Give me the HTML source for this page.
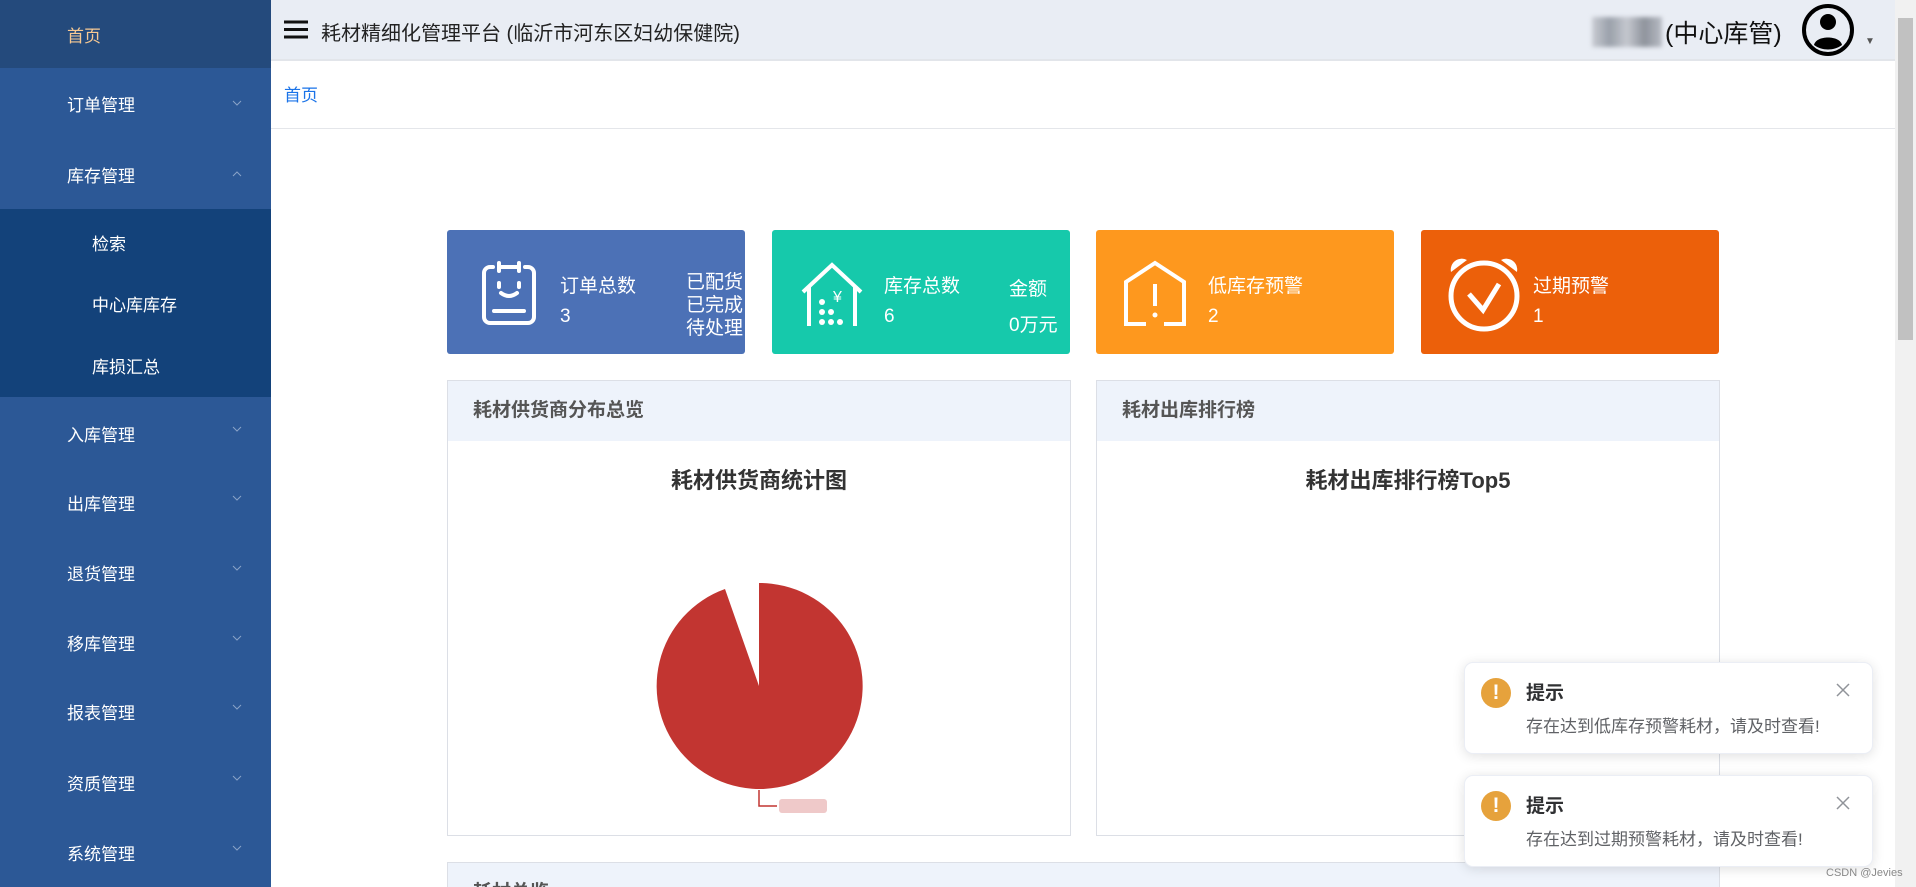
<!DOCTYPE html>
<html style="width:1916px;height:887px;overflow:hidden"><head><meta charset="utf-8"><style>
*{margin:0;padding:0;box-sizing:border-box}
body{width:1916px;height:887px;overflow:hidden;position:relative;background:#fff;font-family:"Liberation Sans","Noto Sans CJK SC",sans-serif}
.abs{position:absolute}
#side{left:0;top:0;width:271px;height:887px;background:#2c5896}
.mi{position:absolute;left:0;width:271px;color:#fff;font-size:17px;padding-left:67px;display:flex;align-items:center}
.arr{position:absolute;left:232px;width:10px;height:10px;}
#hdr{left:271px;top:0;width:1624px;height:61px;background:#e9edf4;border-bottom:2px solid #e2e5ea}
.card{position:absolute;top:230px;height:124px;border-radius:3px;color:#fff;font-size:19px}
.panel{position:absolute;border:1px solid #dcdfe6;background:#fff}
.ph{height:60px;background:#eef3fb;font-weight:bold;color:#555;font-size:19px;padding-left:25px;line-height:60px}
.nt{position:absolute;left:1464px;width:409px;height:92px;background:#fff;border-radius:9px;box-shadow:0 2px 12px rgba(0,0,0,.12);border:1px solid #ebeef5}
.nt .ic{position:absolute;left:16px;top:15px;width:30px;height:30px;border-radius:50%;background:#e6a23c;color:#fff;text-align:center;font-weight:bold;font-size:21px;line-height:30px}
.nt .t{position:absolute;left:61px;top:15px;font-weight:bold;font-size:19px;color:#303133}
.nt .m{position:absolute;left:61px;top:49px;font-size:17px;color:#606266}
.nt .x{position:absolute;right:22px;top:20px}
</style></head><body>
<div id="side" class="abs">
 <div class="mi" style="top:0;height:68px;background:#244a7c;color:#f7c993">首页</div>
 <div class="mi" style="top:68px;height:71px">订单管理<svg class="arr" style="top:30px" viewBox="0 0 10 10"><path d="M1 3l4 4 4-4" fill="none" stroke="#8aa3c8" stroke-width="1"/></svg></div>
 <div class="mi" style="top:139px;height:70px">库存管理<svg class="arr" style="top:30px" viewBox="0 0 10 10"><path d="M1 7l4-4 4 4" fill="none" stroke="#8aa3c8" stroke-width="1"/></svg></div>
 <div class="abs" style="top:209px;left:0;width:271px;height:188px;background:#13427a"></div>
 <div class="mi" style="top:209px;height:66px;padding-left:92px">检索</div>
 <div class="mi" style="top:272px;height:62px;padding-left:92px">中心库库存</div>
 <div class="mi" style="top:334px;height:62px;padding-left:92px">库损汇总</div>
 <div class="mi" style="top:398px;height:70px">入库管理<svg class="arr" style="top:26px" viewBox="0 0 10 10"><path d="M1 3l4 4 4-4" fill="none" stroke="#8aa3c8"/></svg></div>
 <div class="mi" style="top:467px;height:70px">出库管理<svg class="arr" style="top:26px" viewBox="0 0 10 10"><path d="M1 3l4 4 4-4" fill="none" stroke="#8aa3c8"/></svg></div>
 <div class="mi" style="top:537px;height:70px">退货管理<svg class="arr" style="top:26px" viewBox="0 0 10 10"><path d="M1 3l4 4 4-4" fill="none" stroke="#8aa3c8"/></svg></div>
 <div class="mi" style="top:607px;height:70px">移库管理<svg class="arr" style="top:26px" viewBox="0 0 10 10"><path d="M1 3l4 4 4-4" fill="none" stroke="#8aa3c8"/></svg></div>
 <div class="mi" style="top:676px;height:70px">报表管理<svg class="arr" style="top:26px" viewBox="0 0 10 10"><path d="M1 3l4 4 4-4" fill="none" stroke="#8aa3c8"/></svg></div>
 <div class="mi" style="top:747px;height:70px">资质管理<svg class="arr" style="top:26px" viewBox="0 0 10 10"><path d="M1 3l4 4 4-4" fill="none" stroke="#8aa3c8"/></svg></div>
 <div class="mi" style="top:817px;height:70px">系统管理<svg class="arr" style="top:26px" viewBox="0 0 10 10"><path d="M1 3l4 4 4-4" fill="none" stroke="#8aa3c8"/></svg></div>
</div>
<div id="hdr" class="abs">
 <svg class="abs" style="left:13px;top:20px" width="24" height="19" viewBox="0 0 24 19"><path d="M0 2h24M0 9.5h24M0 17h24" stroke="#111" stroke-width="3"/></svg>
 <div class="abs" style="left:50px;top:17px;font-size:20px;color:#222">耗材精细化管理平台 (临沂市河东区妇幼保健院)</div>
 <div class="abs" style="left:1321px;top:17px;width:70px;height:30px;background:linear-gradient(90deg,#c9ccd3,#9aa0aa,#c5c8cf,#8e939c,#b8bcc4);filter:blur(2px)"></div>
 <div class="abs" style="left:1394px;top:14px;font-size:25px;color:#111">(中心库管)</div>
 <svg class="abs" style="left:1530px;top:3px" width="54" height="54" viewBox="0 0 54 54"><circle cx="27" cy="27" r="24" fill="none" stroke="#000" stroke-width="4"/><circle cx="27" cy="19" r="8" fill="#000"/><path d="M13 42c2-10 26-10 28 0c-8 6-20 6-28 0z" fill="#000"/></svg>
 <div class="abs" style="left:1594px;top:36px;font-size:10px;color:#555">▼</div>
</div>
<div class="abs" style="left:1895px;top:0;width:21px;height:887px;background:#f1f1f1"><div style="margin:18px 3px 0;height:322px;background:#c1c1c1"></div></div>
<div class="abs" style="left:284px;top:81px;font-size:17px;color:#1a73e8">首页</div>
<div class="abs" style="left:271px;top:128px;width:1624px;height:1px;background:#e4e6ea"></div>

<div class="card" style="left:447px;width:298px;background:#4c71b6">
 <svg class="abs" style="left:34px;top:31px" width="56" height="66" viewBox="0 0 56 66"><path d="M12 6h-3a6 6 0 0 0-6 6v44a6 6 0 0 0 6 6h38a6 6 0 0 0 6-6v-44a6 6 0 0 0-6-6h-3M18 6h20M18 2v8M38 2v8M18 22v4M38 22v4M20 32q8 6 16 0M13 50h30" fill="none" stroke="#fff" stroke-width="4" stroke-linecap="round"/></svg>
 <div class="abs" style="left:113px;top:41px">订单总数</div><div class="abs" style="left:113px;top:76px">3</div>
 <div class="abs" style="left:239px;top:41px;line-height:23px;width:59px;overflow:hidden;white-space:nowrap">已配货<br>已完成<br>待处理</div>
</div>
<div class="card" style="left:772px;width:298px;background:#16c9ab">
 <svg class="abs" style="left:28px;top:32px" width="64" height="66" viewBox="0 0 64 66"><path d="M3 30L32 3l29 27M9 24v40M55 24v40" fill="none" stroke="#fff" stroke-width="4"/><g fill="#fff"><circle cx="22" cy="40" r="3"/><circle cx="22" cy="50" r="3"/><circle cx="31" cy="50" r="3"/><circle cx="22" cy="60" r="3"/><circle cx="31" cy="60" r="3"/><circle cx="40" cy="60" r="3"/></g><text x="33" y="40" fill="#fff" font-size="16" font-family="Liberation Sans">¥</text></svg>
 <div class="abs" style="left:112px;top:41px">库存总数</div><div class="abs" style="left:112px;top:76px">6</div>
 <div class="abs" style="left:237px;top:44px">金额</div><div class="abs" style="left:237px;top:80px">0万元</div>
</div>
<div class="card" style="left:1096px;width:298px;background:#fe981e">
 <svg class="abs" style="left:26px;top:30px" width="66" height="68" viewBox="0 0 66 68"><path d="M24 64H4V22L33 3l29 19v42H42" fill="none" stroke="#fff" stroke-width="4"/><path d="M33 24v22" stroke="#fff" stroke-width="4"/><circle cx="33" cy="55" r="2.5" fill="#fff"/></svg>
 <div class="abs" style="left:112px;top:41px">低库存预警</div><div class="abs" style="left:112px;top:76px">2</div>
</div>
<div class="card" style="left:1421px;width:298px;background:#ec600a">
 <svg class="abs" style="left:24px;top:24px" width="78" height="78" viewBox="0 0 78 78"><circle cx="39" cy="42" r="33" fill="none" stroke="#fff" stroke-width="5"/><path d="M6 18a11 11 0 0 1 16-12zM72 18a11 11 0 0 0-16-12z" fill="#fff"/><path d="M24 40l14 16 16-26" fill="none" stroke="#fff" stroke-width="5"/></svg>
 <div class="abs" style="left:112px;top:41px">过期预警</div><div class="abs" style="left:112px;top:76px">1</div>
</div>

<div class="panel" style="left:447px;top:380px;width:624px;height:456px">
 <div class="ph">耗材供货商分布总览</div>
 <div class="abs" style="left:0;width:622px;top:82px;text-align:center;font-weight:bold;font-size:22px;color:#333">耗材供货商统计图</div>
 <svg class="abs" style="left:0;top:0" width="622" height="454"><path d="M311 305L311 202A103 103 0 1 1 277 208Z" fill="#c23531"/><path d="M311 409v16h18" fill="none" stroke="#c23531" stroke-width="1.5"/><rect x="331" y="418" width="48" height="14" rx="3" fill="#ebbcbc" opacity=".8"/></svg>
</div>
<div class="panel" style="left:1096px;top:380px;width:624px;height:456px">
 <div class="ph">耗材出库排行榜</div>
 <div class="abs" style="left:0;width:622px;top:82px;text-align:center;font-weight:bold;font-size:22px;color:#333">耗材出库排行榜Top5</div>
</div>
<div class="panel" style="left:447px;top:862px;width:1273px;height:25px;overflow:hidden;border-bottom:none"><div class="ph">耗材总览</div></div>

<div class="nt" style="top:662px"><div class="ic">!</div><div class="t">提示</div><div class="m">存在达到低库存预警耗材，请及时查看!</div><svg class="x" width="14" height="14"><path d="M1 1l12 12M13 1L1 13" stroke="#909399" stroke-width="1.5"/></svg></div>
<div class="nt" style="top:775px"><div class="ic">!</div><div class="t">提示</div><div class="m">存在达到过期预警耗材，请及时查看!</div><svg class="x" width="14" height="14"><path d="M1 1l12 12M13 1L1 13" stroke="#909399" stroke-width="1.5"/></svg></div>
<div class="abs" style="left:1826px;top:867px;font-size:11px;color:#888">CSDN @Jevies</div>
</body></html>
